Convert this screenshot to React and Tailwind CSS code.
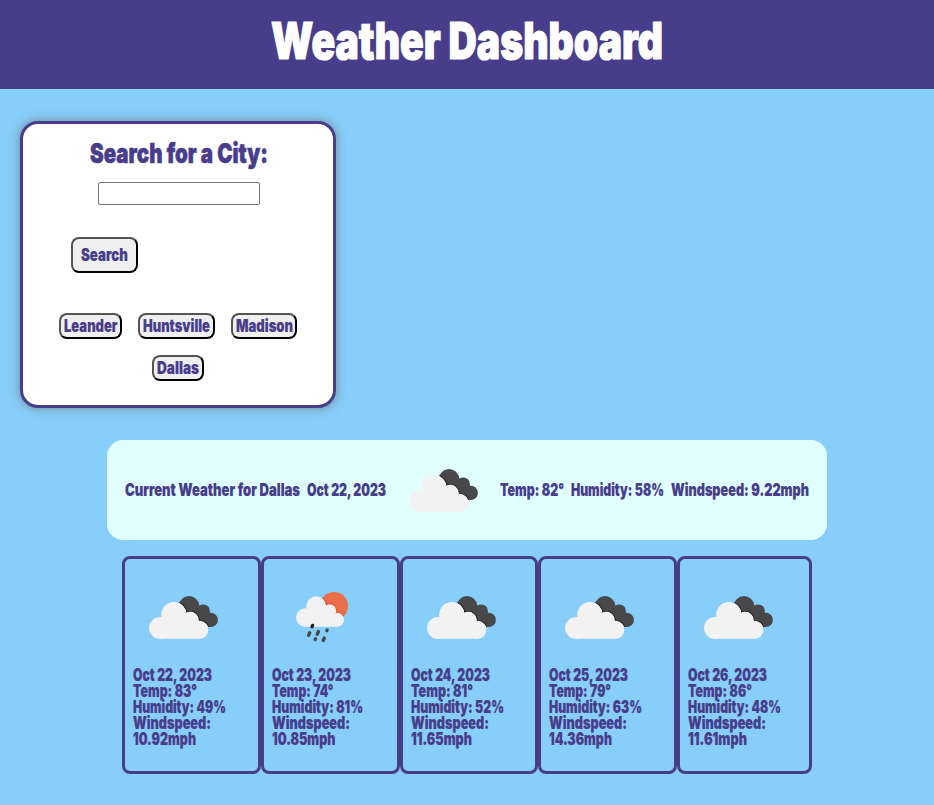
import { useLayoutEffect, useRef } from "react";

// Condensed poster lettering: squeezes a heavy face to the requested width.
function Poster({ w, children, className = "" }) {
  const ref = useRef(null);
  useLayoutEffect(() => {
    const el = ref.current;
    const fit = () => {
      el.style.transform = "none";
      el.style.transform = `scaleX(${w / el.getBoundingClientRect().width})`;
    };
    fit();
    document.fonts?.ready.then(fit);
  }, [w]);
  return (
    <span className={`block shrink-0 ${className}`} style={{ width: w }}>
      <span ref={ref} className="inline-block origin-left whitespace-nowrap">
        {children}
      </span>
    </span>
  );
}

function CloudShape(props) {
  return (
    <g {...props}>
      <circle cx="27" cy="61" r="10.9" />
      <circle cx="40.7" cy="47.6" r="12.5" />
      <circle cx="57.3" cy="53.1" r="8" />
      <circle cx="66.5" cy="63" r="8.8" />
      <path d="M27 52H60L66.5 60V71.8H27Z" />
    </g>
  );
}

function Clouds({ id }) {
  return (
    <svg viewBox="0 0 100 100" className="block size-[100px] shrink-0">
      <clipPath id={id}>
        <circle cx="56" cy="39.5" r="10.4" />
        <circle cx="70.3" cy="44" r="6.6" />
        <circle cx="77.7" cy="52.9" r="7.2" />
        <path d="M50 40L64 36L70 42L78 52L77 60.1H70L56 56Z" />
      </clipPath>
      <g clipPath={`url(#${id})`}>
        <rect width="100" height="100" fill="#48484a" />
        <CloudShape fill="#222" stroke="#222" strokeWidth="2.6" />
        <CloudShape fill="#fff" stroke="#fff" strokeWidth="0.8" />
      </g>
      <CloudShape fill="#f2f2f2" />
    </svg>
  );
}

function SunRain() {
  return (
    <svg viewBox="0 0 100 100" className="block size-[100px] shrink-0">
      <clipPath id="sun">
        <circle cx="62" cy="39" r="14" />
      </clipPath>
      <g clipPath="url(#sun)">
        <rect width="100" height="100" fill="#ec6e4c" />
        <g fill="none" stroke="#e8502f" strokeWidth="2">
          <circle cx="44.2" cy="39.3" r="10" />
          <circle cx="57.8" cy="43.7" r="6.4" />
          <circle cx="65" cy="52.7" r="7" />
        </g>
      </g>
      <g fill="#f2f2f2">
        <circle cx="33.2" cy="50.5" r="9.2" />
        <circle cx="44.2" cy="39.3" r="10" />
        <circle cx="57.8" cy="43.7" r="6.4" />
        <circle cx="65" cy="52.7" r="7" />
        <path d="M33 43H58L65 48V59.7H33Z" />
      </g>
      <g stroke="#48484a" strokeWidth="3.4" strokeLinecap="round">
        <path d="M40.6 58.4L40 59.7" stroke="#222" />
        <path d="M37.7 65.7L36.6 68.3" />
        <path d="M46.4 64.6L45.2 67.3" />
        <path d="M55.2 63L54.9 63.7" />
        <path d="M43.5 71.8L43.2 72.5" />
        <path d="M52.3 71.1L51.2 73.5" />
      </g>
    </svg>
  );
}

const button =
  "box-border block shrink-0 rounded-lg border-2 border-black [border-style:outset] bg-[#efefef] text-left";

const days = [
  { date: ["Oct 22, 2023", 79], temp: ["83°", 64], hum: ["49%", 93], wind: ["10.92mph", 63], box: "w-[139px]" },
  { date: ["Oct 23, 2023", 79], temp: ["74°", 61.5], hum: ["81%", 91], wind: ["10.85mph", 63.5], box: "w-[139px]", rain: true },
  { date: ["Oct 24, 2023", 79], temp: ["81°", 62], hum: ["52%", 93], wind: ["11.65mph", 61], box: "w-[138px]" },
  { date: ["Oct 25, 2023", 79], temp: ["79°", 62], hum: ["63%", 93], wind: ["14.36mph", 63], box: "w-[139px]" },
  { date: ["Oct 26, 2023", 79], temp: ["86°", 64], hum: ["48%", 93], wind: ["11.61mph", 59], box: "w-[135px]" },
];

export default function App() {
  return (
    <div className="h-[805px] w-[934px] overflow-hidden bg-[#87cefa] font-['Inter',sans-serif] text-[17.2px] leading-4 font-black text-[#483d8b] [-webkit-text-stroke:0.15px_currentColor]">
      <header className="flex h-[89px] justify-center bg-[#483d8b] pt-[11px] text-white">
        <h1 className="text-[51px] leading-[60px] [-webkit-text-stroke:1.2px_currentColor]">
          <Poster w={392}>Weather Dashboard</Poster>
        </h1>
      </header>

      <section className="mt-8 ml-5 flex h-[287px] w-[316px] flex-col items-center rounded-[18px] border-3 border-[#483d8b] bg-white shadow-[0_0_10px_1px_rgba(110,110,110,0.65)]">
        <h2 className="mt-[13px] pl-px text-[27.5px] leading-8 [-webkit-text-stroke:0.6px_currentColor]">
          <Poster w={178}>Search for a City:</Poster>
        </h2>
        <input className="mt-[13px] ml-[2px] block h-[23px] w-[162px] rounded-[2px] border border-[#767676] bg-white" />
        <div className="mt-8 w-full pl-12">
          <button className={`${button} h-9 w-[67px] pl-2`}>
            <Poster w={47}>Search</Poster>
          </button>
        </div>
        <div className="mt-10 flex w-full flex-wrap justify-center gap-4 px-5">
          <button className={`${button} h-[26px] w-[63px] pl-[3px]`}>
            <Poster w={53.5}>Leander</Poster>
          </button>
          <button className={`${button} h-[26px] w-[77px] pl-[3px]`}>
            <Poster w={67}>Huntsville</Poster>
          </button>
          <button className={`${button} h-[26px] w-[66px] pl-[3px]`}>
            <Poster w={57}>Madison</Poster>
          </button>
          <button className={`${button} h-[26px] w-[52px] pl-[3px]`}>
            <Poster w={42}>Dallas</Poster>
          </button>
        </div>
      </section>

      <section className="mt-8 ml-[107px] flex h-[100px] w-[720px] items-center rounded-2xl bg-[#e0ffff] pl-[18px]">
        <Poster w={175}>Current Weather for Dallas</Poster>
        <Poster w={79} className="ml-[7px]">Oct 22, 2023</Poster>
        <div className="ml-[7px]">
          <Clouds id="now" />
        </div>
        <Poster w={64} className="ml-[7px]">Temp: 82°</Poster>
        <Poster w={93} className="ml-[7px]">Humidity: 58%</Poster>
        <Poster w={138} className="ml-[7px]">Windspeed: 9.22mph</Poster>
      </section>

      <section className="mt-4 ml-[122px] flex">
        {days.map((d, i) => (
          <article key={i} className={`${d.box} h-[218px] shrink-0 rounded-lg border-3 border-[#483d8b] p-2`}>
            {d.rain ? <SunRain /> : <Clouds id={`day${i}`} />}
            <Poster w={d.date[1]} className="h-4">{d.date[0]}</Poster>
            <Poster w={d.temp[1]} className="h-4">Temp: {d.temp[0]}</Poster>
            <Poster w={d.hum[1]} className="h-4">Humidity: {d.hum[0]}</Poster>
            <Poster w={78} className="h-4">Windspeed:</Poster>
            <Poster w={d.wind[1]} className="h-4">{d.wind[0]}</Poster>
          </article>
        ))}
      </section>
    </div>
  );
}
